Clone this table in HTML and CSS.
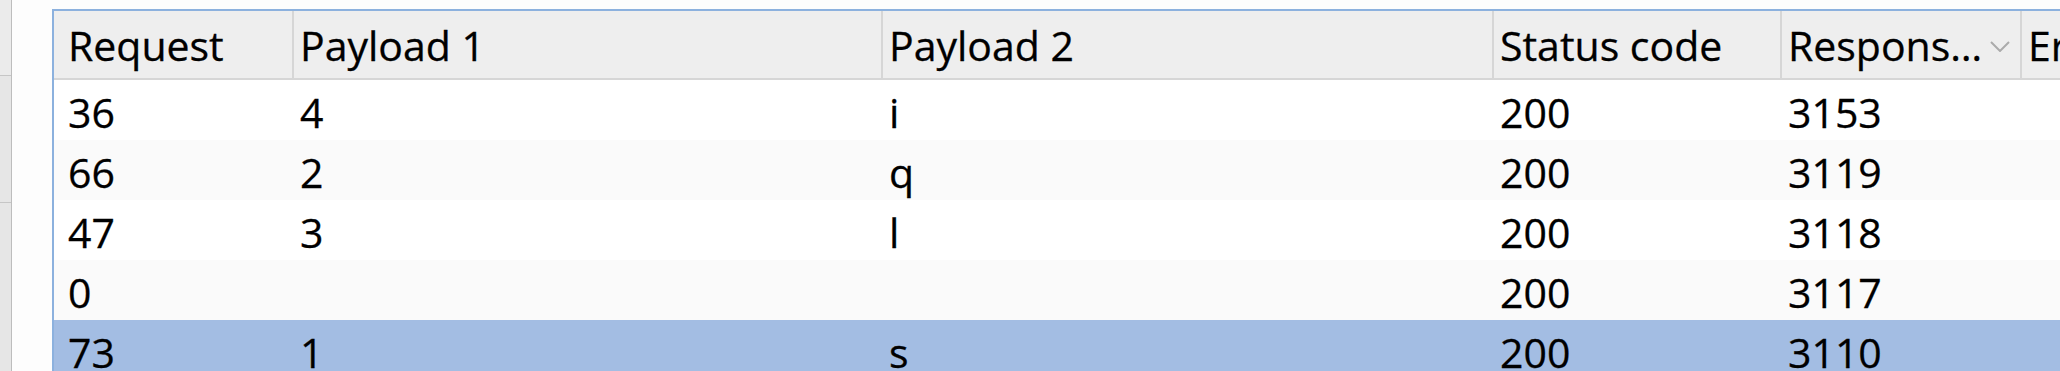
FILE: index.html
```html
<!DOCTYPE html>
<html>
<head>
<meta charset="utf-8">
<link rel="stylesheet" href="styles.css">
</head>
<body>
<div class="app">
  <div class="sidebar">
    <div class="seg seg-top"></div>
    <div class="seg seg-mid"></div>
    <div class="seg seg-bot"></div>
  </div>
  <div class="main">
    <div class="table">
      <div class="row head">
        <div class="cell first">Request</div>
        <div class="cell">Payload 1</div>
        <div class="cell">Payload 2</div>
        <div class="cell">Status code</div>
        <div class="cell sorted"><span class="label">Respons…</span><svg class="chev" width="20" height="11" viewBox="0 0 20 11"><path d="M1 1 L10 10 L19 1" fill="none" stroke="#ababab" stroke-width="2"/></svg></div>
        <div class="cell">Error</div>
      </div>
      <div class="row">
        <div class="cell first">36</div><div class="cell">4</div><div class="cell">i</div><div class="cell">200</div><div class="cell">3153</div><div class="cell"></div>
      </div>
      <div class="row alt">
        <div class="cell first">66</div><div class="cell">2</div><div class="cell">q</div><div class="cell">200</div><div class="cell">3119</div><div class="cell"></div>
      </div>
      <div class="row">
        <div class="cell first">47</div><div class="cell">3</div><div class="cell">l</div><div class="cell">200</div><div class="cell">3118</div><div class="cell"></div>
      </div>
      <div class="row alt">
        <div class="cell first">0</div><div class="cell"></div><div class="cell"></div><div class="cell">200</div><div class="cell">3117</div><div class="cell"></div>
      </div>
      <div class="row selected">
        <div class="cell first">73</div><div class="cell">1</div><div class="cell">s</div><div class="cell">200</div><div class="cell">3110</div><div class="cell"></div>
      </div>
    </div>
  </div>
</div>
</body>
</html>
```

FILE: styles.css
```css
html, body {
  margin: 0;
  padding: 0;
  background: #ffffff;
  overflow: hidden;
}
.app {
  display: flex;
  width: 2060px;
  height: 371px;
  overflow: hidden;
  font-family: "Open Sans", "Noto Sans", sans-serif;
  font-size: 41px;
  color: #000;
  -webkit-text-stroke: 0.3px #000;
}
.sidebar {
  width: 11px;
  flex: none;
  border-right: 1px solid #bdbdbd;
  display: flex;
  flex-direction: column;
  background: #e6e6e6;
}
.seg {
  border-bottom: 1px solid #c6c6c6;
}
.seg-top { height: 75px; background: #ebebeb; }
.seg-mid { height: 126px; background: #e6e6e6; }
.seg-bot { flex: 1; border-bottom: none; background: #e6e6e6; }
.main {
  flex: 1;
  min-width: 0;
  padding: 9px 0 0 40px;
  background: #fdfdfd;
}
.table {
  border-top: 2px solid #8cb1de;
  border-left: 2px solid #8cb1de;
  background: #fff;
  height: 100%;
  overflow: hidden;
}
.row {
  display: grid;
  grid-template-columns: 238px 589px 611px 288px 240px 1fr;
  height: 60px;
  background: #ffffff;
}
.row.alt { background: #fafafa; }
.row.selected { background: #a3bde3; }
.cell {
  padding: 4px 0 0 6px;
  line-height: 56px;
  white-space: nowrap;
  overflow: hidden;
}
.cell.first { padding-left: 14px; }
.row.head {
  height: 67px;
  background: #eeeeee;
  border-bottom: 2px solid #d6d6d6;
}
.row.head .cell {
  padding-top: 1px;
  line-height: 66px;
}
.row.head .cell + .cell {
  border-left: 2px solid #d6d6d6;
}
.row:not(.head) .cell + .cell {
  border-left: 2px solid transparent;
}
.cell.sorted {
  display: flex;
  align-items: flex-start;
}
.cell.sorted .label {
  flex: 1;
  overflow: hidden;
}
.chev {
  flex: none;
  margin: 29px 10px 0 0;
}
```
